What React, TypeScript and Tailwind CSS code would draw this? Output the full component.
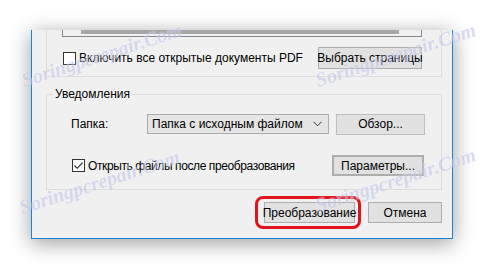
import React from "react";

const ui = { fontFamily: '"Liberation Sans", Arial, sans-serif' };

function Box({ checked }: { checked?: boolean }) {
  return (
    <span className="w-[13px] h-[13px] border border-[#333333] bg-white shrink-0 flex items-center justify-center">
      {checked && (
        <svg width="11" height="11" viewBox="0 0 11 11">
          <polyline points="1.5,5.5 4.2,8.3 9.6,2.6" fill="none" stroke="#222" strokeWidth="1.1" />
        </svg>
      )}
    </span>
  );
}

function Btn({ children, className = "" }: { children: React.ReactNode; className?: string }) {
  return (
    <button className={"h-[21px] bg-[#e1e1e1] border border-[#adadad] text-[12px] leading-none whitespace-nowrap text-black flex items-center justify-center shrink-0 " + className}>
      {children}
    </button>
  );
}

function Mark({ left, top }: { left: number; top: number }) {
  return (
    <span
      className="absolute origin-bottom-left -rotate-[18deg] italic font-bold text-[20px] leading-none whitespace-nowrap text-[#c3c8e8] opacity-60 [text-shadow:0_0_2px_#fff]"
      style={{ left, top, fontFamily: '"Liberation Serif", serif' }}
    >
      Soringpcrepair.Com
    </span>
  );
}

export default function App() {
  return (
    <div className="w-[485px] h-[271px] bg-white relative overflow-hidden" style={ui}>
      <div className="ml-[31px] mt-[30px] w-[422px] h-[209px] bg-[#f0f0f0] border-x border-b border-[#1883d7] shadow-[0_4px_20px_rgba(0,0,0,0.4)] flex flex-col">
        {/* group with the page list */}
        <div className="ml-[14px] w-[396px] border-x border-b border-[#dcdcdc] flex flex-col pb-[7px]">
          <div className="ml-[15px] w-[360px] h-[7px] border-x border-b border-[#828790] bg-[#f0f0f0] flex">
            <div className="ml-[18px] w-[318px] h-[4px] bg-[#a6a6a6]" />
          </div>
          <div className="mt-[10px] flex items-center pl-[16px] pr-[19px] h-[22px]">
            <Box />
            <span className="ml-[3px] text-[12px] flex-1 whitespace-nowrap">Включить все открытые документы PDF</span>
            <Btn className="w-[104px] h-[22px]">Выбрать страницы</Btn>
          </div>
        </div>

        {/* notifications group */}
        <fieldset className="ml-[14px] mt-[9px] w-[396px] h-[104px] border border-[#dcdcdc]">
          <legend className="ml-[6px] px-[2px] text-[12px] leading-[16px]">Уведомления</legend>
          <div className="mt-[12px] flex items-center h-[20px]">
            <span className="ml-[24px] w-[76px] text-[12px]">Папка:</span>
            <div className="w-[182px] h-[20px] bg-[#e5e5e5] border border-[#acacac] flex items-center pl-[4px] pr-[6px]">
              <span className="flex-1 text-[12px] whitespace-nowrap">Папка с исходным файлом</span>
              <svg width="9" height="6" viewBox="0 0 9 6">
                <polyline points="0.5,0.8 4.5,4.8 8.5,0.8" fill="none" stroke="#333" strokeWidth="1" />
              </svg>
            </div>
            <Btn className="ml-[7px] w-[89px] h-[20px] bg-[#cccccc] border-[#bfbfbf] text-[#838383]">Обзор...</Btn>
          </div>
          <div className="mt-[21px] flex items-center h-[21px]">
            <span className="ml-[25px] flex items-center flex-1">
              <Box checked />
              <span className="ml-[3px] text-[12px] tracking-[-0.4px] whitespace-nowrap">Открыть файлы после преобразования</span>
            </span>
            <Btn className="mr-[17px] w-[92px] border-2 border-[#0078d7]">Параметры...</Btn>
          </div>
        </fieldset>

        <div className="mt-[12px] flex justify-end pr-[10px] gap-[13px]">
          <span className="relative">
            <Btn className="w-[91px] h-[20px]">Преобразование</Btn>
            <span className="absolute -left-[9px] -right-[6px] -top-[6px] -bottom-[6px] border-[3px] border-[#e3131b] rounded-[8px]" />
          </span>
          <Btn className="w-[74px] h-[20px]">Отмена</Btn>
        </div>
      </div>

      <div className="absolute inset-0 pointer-events-none">
        <Mark left={25} top={70} />
        <Mark left={319} top={70} />
        <Mark left={23} top={197} />
        <Mark left={319} top={195} />
      </div>
    </div>
  );
}
